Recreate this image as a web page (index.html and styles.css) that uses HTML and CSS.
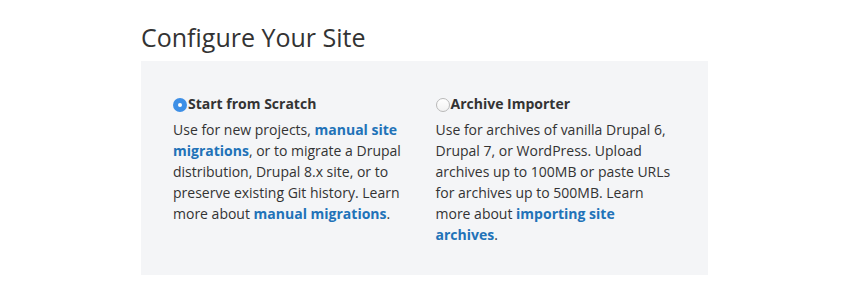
FILE: index.html
```html
<!DOCTYPE html>
<html lang="en">
<head>
  <meta charset="UTF-8">
  <title>Configure Your Site</title>
  <link rel="stylesheet" href="styles.css">
</head>
<body>
<div class="page">
  <h2>Configure Your Site</h2>
  <div class="panel">
    <div class="option">
      <div class="option-title"><span class="radio checked"></span>Start from Scratch</div>
      <p>Use for new projects, <a href="#">manual site migrations</a>, or to migrate a Drupal distribution, Drupal 8.x site, or to preserve existing Git history. Learn more about <a href="#">manual migrations</a>.</p>
    </div>
    <div class="option">
      <div class="option-title"><span class="radio"></span>Archive Importer</div>
      <p>Use for archives of vanilla Drupal 6, Drupal 7, or WordPress. Upload archives up to 100MB or paste URLs for archives up to 500MB. Learn more about <a href="#">importing site archives</a>.</p>
    </div>
  </div>
</div>
</body>
</html>
```

FILE: styles.css
```css
body {
  margin: 0;
  font-family: "Open Sans", Arial, sans-serif;
  color: #333;
  background: #fff;
}
.page {
  padding: 21px 0 0 141px;
}
h2 {
  font-size: 25px;
  font-weight: 400;
  line-height: 32px;
  margin: 0 0 8px;
  color: #333;
}
.panel {
  width: 567px;
  height: 214px;
  box-sizing: border-box;
  background: #f4f5f7;
  padding: 32px 32px 0;
  display: grid;
  grid-template-columns: 1fr 1fr;
  column-gap: 22px;
}
.option-title {
  display: flex;
  align-items: center;
  gap: 1px;
  font-size: 14px;
  font-weight: 700;
  line-height: 21px;
}
.radio {
  flex: none;
  width: 14px;
  height: 14px;
  box-sizing: border-box;
  border-radius: 50%;
  border: 1px solid #b9b9b9;
  background: linear-gradient(#fff, #f2f2f2);
  position: relative;
  top: 1px;
}
.radio.checked {
  border: none;
  background: #3d8fe6;
}
.radio.checked::after {
  content: "";
  position: absolute;
  left: 5px;
  top: 5px;
  width: 4px;
  height: 4px;
  border-radius: 50%;
  background: #fff;
}
.option p {
  margin: 5px 0 0;
  font-size: 14px;
  line-height: 21px;
}
.option a {
  color: #2172b8;
  font-weight: 700;
  text-decoration: none;
}
```
